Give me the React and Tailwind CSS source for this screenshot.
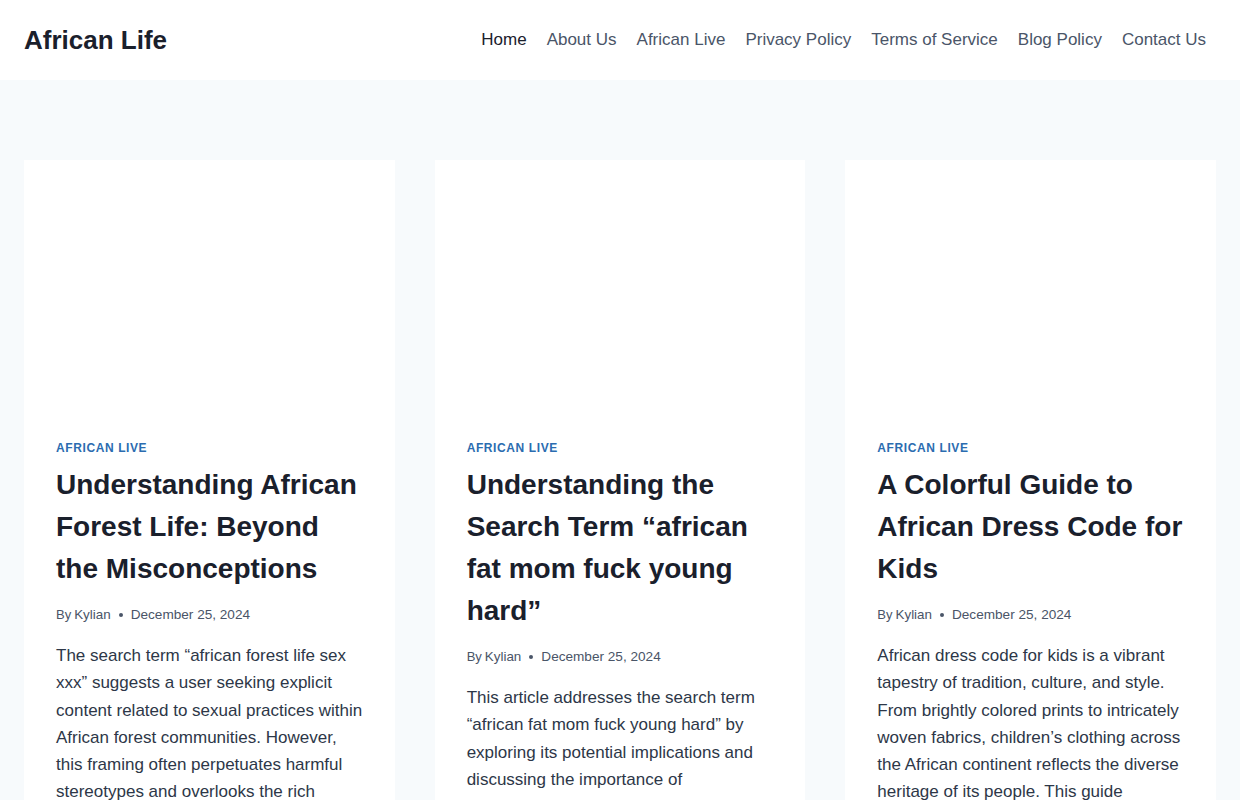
import React from 'react';

const navItems = ['Home', 'About Us', 'African Live', 'Privacy Policy', 'Terms of Service', 'Blog Policy', 'Contact Us'];

const posts = [
  {
    title: 'Understanding African Forest Life: Beyond the Misconceptions',
    excerpt:
      'The search term \u201cafrican forest life sex xxx\u201d suggests a user seeking explicit content related to sexual practices within African forest communities. However, this framing often perpetuates harmful stereotypes and overlooks the rich cultural diversity of the region.'
  },
  {
    title: 'Understanding the Search Term \u201cafrican fat mom fuck young hard\u201d',
    excerpt:
      'This article addresses the search term \u201cafrican fat mom fuck young hard\u201d by exploring its potential implications and discussing the importance of responsible online behavior.'
  },
  {
    title: 'A Colorful Guide to African Dress Code for Kids',
    excerpt:
      'African dress code for kids is a vibrant tapestry of tradition, culture, and style. From brightly colored prints to intricately woven fabrics, children\u2019s clothing across the African continent reflects the diverse heritage of its people. This guide explores the styles.'
  }
];

const PostCard = ({ post }) => (
  <article className="bg-white flex flex-col">
    <div className="w-full aspect-[3/2] bg-white" />
    <div className="px-8 pt-8 pb-8">
      <div className="text-[12px] leading-[18px] font-bold uppercase tracking-[0.05em] text-[#2b6cb0]">
        African Live
      </div>
      <h2 className="mt-[7px] text-[28px] leading-[42px] font-bold text-[#1a202c]">{post.title}</h2>
      <div className="mt-[15px] flex items-center text-[13.6px] leading-[20px] text-[#4a5568]">
        <span className="text-[13px]">By</span>
        <span className="ml-[3px] text-[13.4px]">Kylian</span>
        <span className="mx-[8px] w-[4px] h-[4px] rounded-full bg-[#4a5568]" />
        <span>December 25, 2024</span>
      </div>
      <p className="mt-[17px] text-[17px] leading-[27.2px] text-[#2d3748]">{post.excerpt}</p>
    </div>
  </article>
);

const App = () => {
  return (
    <div className="min-h-screen bg-[#f7fafc] font-['Liberation_Sans',Arial,sans-serif]">
      {/* Header */}
      <header className="bg-white h-[80px] px-6 flex items-center justify-between">
        <div className="text-[26px] font-bold text-[#1a202c]">African Life</div>
        <nav className="flex items-center">
          {navItems.map((item, i) => (
            <a
              key={item}
              className={`px-[10px] text-[17px] leading-[24px] ${i === 0 ? 'text-[#1a202c]' : 'text-[#4a5568]'}`}
            >
              {item}
            </a>
          ))}
        </nav>
      </header>

      {/* Posts grid */}
      <main className="px-6 pt-[80px]">
        <div className="grid grid-cols-3 gap-10 items-start">
          {posts.map((p) => (
            <PostCard key={p.title} post={p} />
          ))}
        </div>
      </main>
    </div>
  );
};

export default App;
